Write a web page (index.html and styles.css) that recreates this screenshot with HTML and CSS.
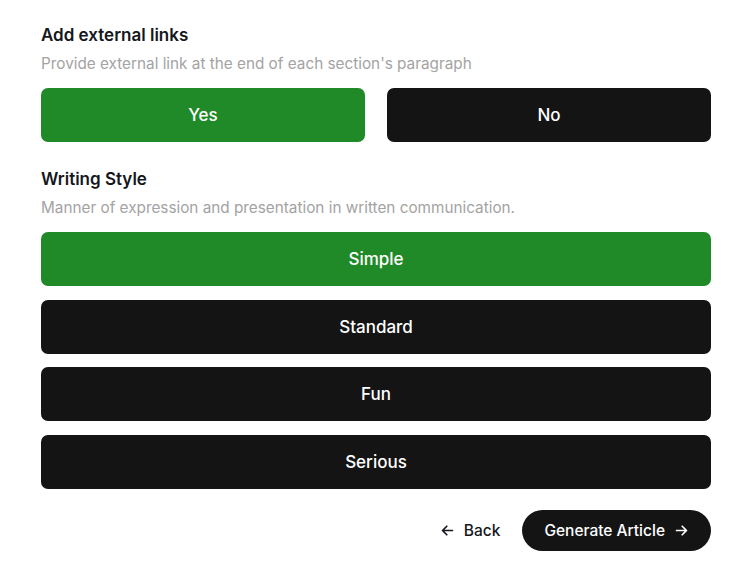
FILE: index.html
```html
<!DOCTYPE html>
<html lang="en">
<head>
    <meta charset="UTF-8">
    <meta name="viewport" content="width=device-width, initial-scale=1.0">
    <title>Article Settings</title>
    <link rel="stylesheet" href="styles.css">
</head>
<body>
    <div class="form">
        <div class="field">
            <h3 class="label">Add external links</h3>
            <p class="hint">Provide external link at the end of each section's paragraph</p>
            <div class="options row">
                <button class="option active">Yes</button>
                <button class="option">No</button>
            </div>
        </div>

        <div class="field">
            <h3 class="label">Writing Style</h3>
            <p class="hint">Manner of expression and presentation in written communication.</p>
            <div class="options column">
                <button class="option active">Simple</button>
                <button class="option">Standard</button>
                <button class="option">Fun</button>
                <button class="option">Serious</button>
            </div>
        </div>

        <div class="actions">
            <button class="back">
                <svg width="17" height="17" viewBox="0 0 24 24" fill="none" stroke="currentColor" stroke-width="2.4" stroke-linecap="round" stroke-linejoin="round"><path d="M19 12H5M11 6l-6 6 6 6"/></svg>
                Back
            </button>
            <button class="generate">
                Generate Article
                <svg width="17" height="17" viewBox="0 0 24 24" fill="none" stroke="currentColor" stroke-width="2.4" stroke-linecap="round" stroke-linejoin="round"><path d="M5 12h14M13 6l6 6-6 6"/></svg>
            </button>
        </div>
    </div>
</body>
</html>
```

FILE: styles.css
```css
:root {
    --green: #1f8a27;
    --dark: #141414;
    --text: #15171c;
    --muted: #a3a3a3;
}

* {
    box-sizing: border-box;
}

body {
    margin: 0;
    background: #ffffff;
    color: var(--text);
    font-family: Inter, 'Noto Sans', sans-serif;
}

.form {
    width: 670px;
    margin-left: 41px;
    padding-top: 23px;
}

.field {
    margin-bottom: 25px;
}

.label {
    margin: 0;
    font-size: 17px;
    line-height: 24px;
    font-weight: 600;
}

.hint {
    margin: 6px 0 0;
    font-size: 15.3px;
    line-height: 22px;
    color: var(--muted);
}

.options {
    display: flex;
    margin-top: 13px;
}

.options.row {
    gap: 22px;
}

.options.row .option {
    flex: 1;
}

.options.column {
    flex-direction: column;
    gap: 13.5px;
}

.option {
    height: 54px;
    border: none;
    border-radius: 7px;
    background: var(--dark);
    color: #ffffff;
    font-family: inherit;
    font-size: 17px;
    font-weight: 500;
    cursor: pointer;
}

.option.active {
    background: var(--green);
}

.actions {
    display: flex;
    justify-content: flex-end;
    align-items: center;
    gap: 22px;
    margin-top: -4px;
}

.back,
.generate {
    display: flex;
    align-items: center;
    gap: 8px;
    border: none;
    font-family: inherit;
    font-size: 15.5px;
    font-weight: 500;
    cursor: pointer;
}

.back {
    background: none;
    color: var(--text);
    padding: 0;
}

.generate {
    height: 41px;
    padding: 0 21px 0 22px;
    border-radius: 21px;
    background: var(--dark);
    color: #ffffff;
}
```
